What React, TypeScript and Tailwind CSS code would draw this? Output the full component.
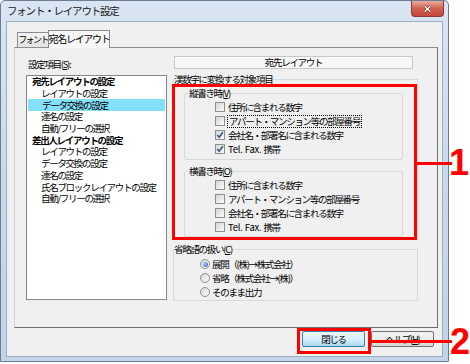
const jp = "font-['Noto_Sans_CJK_JP',sans-serif]";

function Check({ checked }: { checked?: boolean }) {
  return (
    <span className="flex h-[10px] w-[10px] shrink-0 items-center justify-center border border-[#8e8f8f] bg-gradient-to-br from-[#d6d6d6] to-[#fbfbfb]">
      {checked && (
        <svg viewBox="0 0 8 8" className="h-[8px] w-[8px]">
          <path d="M1.2 3.9 L3.2 6.2 L6.9 1.3" fill="none" stroke="#3b5489" strokeWidth="1.6" />
        </svg>
      )}
    </span>
  );
}

function Radio({ on }: { on?: boolean }) {
  return (
    <span className="flex h-[10px] w-[10px] shrink-0 items-center justify-center rounded-full border border-[#8e8f8f] bg-gradient-to-br from-[#d6d6d6] to-[#fdfdfd]">
      {on && <span className="h-[5px] w-[5px] rounded-full bg-[radial-gradient(circle_at_35%_35%,#a9cdf3,#2d5ba6)]" />}
    </span>
  );
}

function CheckRow({ label, checked, focus }: { label: React.ReactNode; checked?: boolean; focus?: boolean }) {
  return (
    <div className="flex h-[14px] items-center gap-[2px] pl-[30px]">
      <Check checked={checked} />
      <span className={focus ? "border border-dotted border-black px-[1px] leading-[11px]" : "px-[1px] leading-[12px]"}>{label}</span>
    </div>
  );
}

const tel = (
  <>
    <span className="tracking-[-0.2px]">Tel. Fax. </span>携帯
  </>
);

const listItems: [string, boolean][] = [
  ["宛先レイアウトの設定", true],
  ["レイアウトの設定", false],
  ["データ交換の設定", false],
  ["連名の設定", false],
  ["自動/フリーの選択", false],
  ["差出人レイアウトの設定", true],
  ["レイアウトの設定", false],
  ["データ交換の設定", false],
  ["連名の設定", false],
  ["氏名ブロックレイアウトの設定", false],
  ["自動/フリーの選択", false],
];

export default function App() {
  return (
    <div className={`relative h-[364px] w-[470px] overflow-hidden whitespace-nowrap bg-white text-[9.5px] tracking-[-1.3px] text-black ${jp}`}>
      {/* window */}
      <div className="flex h-[362px] w-[449px] flex-col rounded-t-[5px] border border-[#6b7d92] bg-gradient-to-b from-[#d9e5f2] via-[#cad9ea] to-[#c3d4e8] px-[5px] pb-[4px]">
        <div className="flex h-[20px] items-start justify-between">
          <span className="pl-[1px] pt-[3px] text-[10.5px] leading-[14px] tracking-[-1.2px] text-[#1a1a1a]">フォント・レイアウト設定</span>
          <div className="-mr-[1px] flex h-[16px] w-[33px] items-center justify-center rounded-b-[4px] border border-t-0 border-[#8a3b37] bg-gradient-to-b from-[#e9a99c] via-[#d0614f] to-[#c7463a]">
            <svg viewBox="0 0 10 10" className="h-[8px] w-[9px]">
              <path d="M1.5 1.5 L8.5 8.5 M8.5 1.5 L1.5 8.5" stroke="#5a1d17" strokeWidth="3" />
              <path d="M1.5 1.5 L8.5 8.5 M8.5 1.5 L1.5 8.5" stroke="#ffffff" strokeWidth="1.8" />
            </svg>
          </div>
        </div>

        {/* client */}
        <div className="flex flex-1 flex-col border border-[#9aadc3] bg-[#f0f0f0] pl-[7px] pt-[8px]">
          {/* tabs */}
          <div className="ml-[3px] flex h-[17px] items-end">
            <div className="flex h-[15px] w-[32px] items-center justify-center overflow-hidden border border-b-0 border-[#898c95] bg-gradient-to-b from-[#f3f3f3] to-[#e4e4e4] text-[9px] leading-[12px] tracking-[-1.6px]">
              フォント
            </div>
            <div className="relative -mb-[1px] -ml-[1px] flex h-[18px] w-[62px] items-center justify-center border border-b-0 border-[#898c95] bg-[#f7f7f7] pb-[1px] text-[10px] leading-[12px] tracking-[-1.3px]">
              宛名レイアウト
            </div>
          </div>

          {/* panel */}
          <div className="flex h-[281px] w-[424px] border border-t-[#898c95] border-l-[#d4d4d4] border-r-[#6d6d6d] border-b-[#6d6d6d] pl-[11px]">
            {/* left column */}
            <div className="flex w-[141px] flex-col pt-[10px]">
              <div className="h-[12px] pl-[2px] leading-[12px]">
                設定項目(<span className="underline">S</span>):
              </div>
              <div className="mt-[5px] h-[225px] border border-[#828790] bg-white">
                {listItems.map(([t, bold], i) => (
                  <div
                    key={i}
                    className={`flex h-[11.7px] items-center leading-[11px] ${bold ? "pl-[5px] font-bold" : "pl-[14px]"} ${i === 2 ? "ml-[1px] mr-[1px] bg-[#84dff8]" : ""}`}
                  >
                    {t}
                  </div>
                ))}
              </div>
            </div>

            {/* right column */}
            <div className="ml-[5px] flex w-[247px] flex-col pt-[8px]">
              <div className="ml-[2px] flex h-[13px] w-[239px] items-center justify-center border border-[#c8c8c8] bg-[#f7f7f7] leading-[11px]">
                宛先レイアウト
              </div>

              <fieldset className="ml-[1px] mt-[4px] w-[245px] border border-[#d3d9df] pb-[2px]">
                <legend className="leading-[12px]">漢数字に変換する対象項目</legend>

                <fieldset className="ml-[10px] mt-[2px] w-[219px] rounded-[2px] border border-[#d3d9df] pb-[3px]">
                  <legend className="ml-[4px] leading-[12px]">
                    縦書き時(<span className="underline">V</span>)
                  </legend>
                  <div className="pt-[1px]">
                    <CheckRow label="住所に含まれる数字" />
                    <CheckRow label="アパート・マンション等の部屋番号" focus />
                    <CheckRow label="会社名・部署名に含まれる数字" checked />
                    <CheckRow label={tel} checked />
                  </div>
                </fieldset>

                <fieldset className="ml-[10px] mt-[5px] w-[219px] rounded-[2px] border border-[#d3d9df] pb-[2px]">
                  <legend className="ml-[4px] leading-[12px]">
                    横書き時(<span className="underline">O</span>)
                  </legend>
                  <div className="pt-[1px]">
                    <CheckRow label="住所に含まれる数字" />
                    <CheckRow label="アパート・マンション等の部屋番号" />
                    <CheckRow label="会社名・部署名に含まれる数字" />
                    <CheckRow label={tel} />
                  </div>
                </fieldset>
              </fieldset>

              <fieldset className="ml-[1px] mt-[3px] w-[245px] border border-[#d3d9df] pb-[1px]">
                <legend className="leading-[12px]">
                  省略語の扱い(<span className="underline">C</span>)
                </legend>
                <div className="pt-[2px]">
                  {[
                    ["展開（(株)→株式会社）", true],
                    ["省略（株式会社→(株)）", false],
                    ["そのまま出力", false],
                  ].map(([t, on], i) => (
                    <div key={i} className="flex h-[14px] items-center gap-[2px] pl-[26px]">
                      <Radio on={on as boolean} />
                      <span className="leading-[12px]">{t as string}</span>
                    </div>
                  ))}
                </div>
              </fieldset>
            </div>
          </div>

          {/* buttons */}
          <div className="mr-[8px] mt-[3px] flex justify-end gap-[6px]">
            <div className="flex h-[16px] w-[63px] items-center justify-center rounded-[2px] border border-[#3c7fb1] bg-gradient-to-b from-[#eaf6fd] via-[#d9f0fc] to-[#a7d9f5] leading-[12px]">
              閉じる
            </div>
            <div className="flex h-[16px] w-[63px] items-center justify-center rounded-[2px] border border-[#707070] bg-gradient-to-b from-[#f2f2f2] via-[#ebebeb] to-[#d5d5d5] leading-[12px]">
              ヘルプ(<span className="underline">H</span>)
            </div>
          </div>
        </div>
      </div>

      {/* annotations */}
      <div className="absolute left-[172px] top-[84px] h-[156px] w-[245px] border-[3px] border-[#ff0000]" />
      <div className="absolute left-[416px] top-[162px] h-[3px] w-[36px] bg-[#ff0000]" />
      <div className="absolute left-[449px] top-[145px] w-[20px] font-['Liberation_Sans',sans-serif] text-[36px] font-bold leading-none tracking-normal text-[#ff0000]">1</div>

      <div className="absolute left-[297px] top-[328px] h-[26px] w-[74px] border-[3px] border-[#ff0000]" />
      <div className="absolute left-[370px] top-[340px] h-[3px] w-[82px] bg-[#ff0000]" />
      <div className="absolute left-[450px] top-[324px] w-[20px] font-['Liberation_Sans',sans-serif] text-[36px] font-bold leading-none tracking-normal text-[#ff0000]">2</div>
    </div>
  );
}
